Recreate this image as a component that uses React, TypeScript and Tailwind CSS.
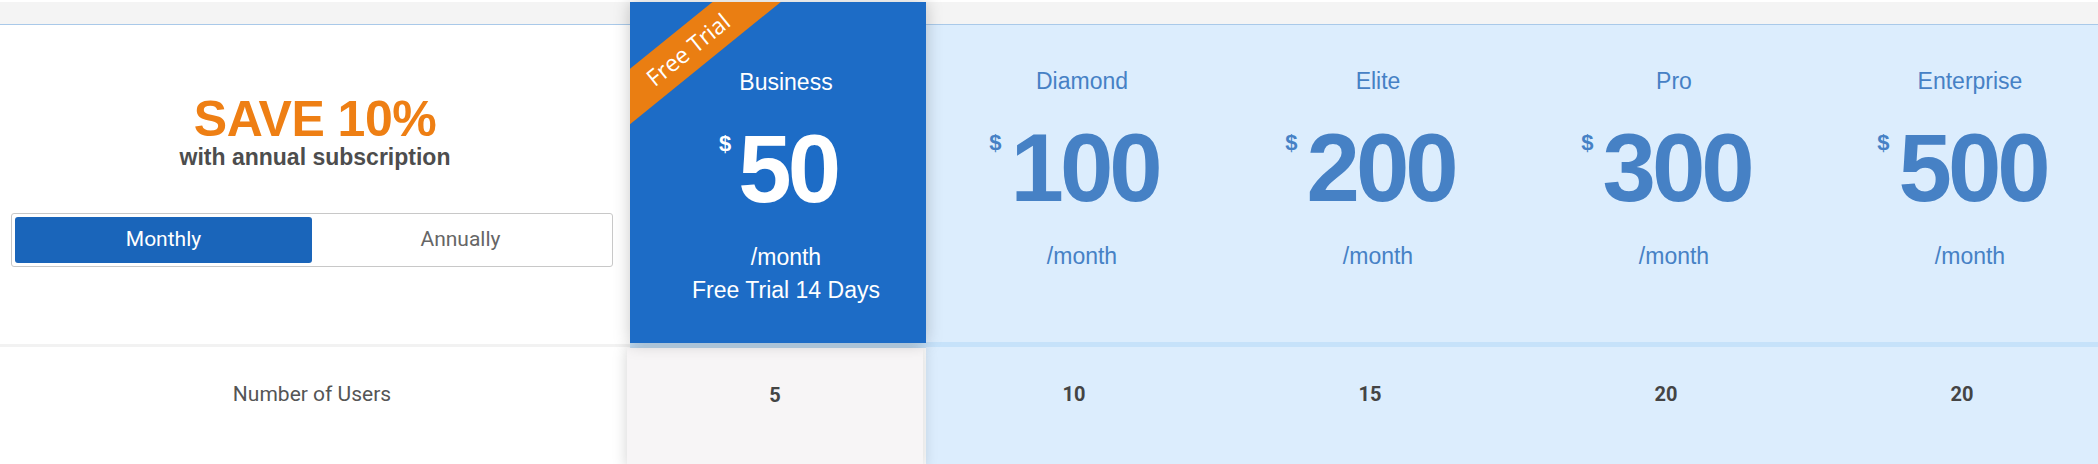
import React from "react";

const plans = [
  { name: "Diamond", price: "100", users: "10" },
  { name: "Elite", price: "200", users: "15" },
  { name: "Pro", price: "300", users: "20" },
  { name: "Enterprise", price: "500", users: "20" },
];

const Price = ({ value, gap }: { value: string; gap: string }) => {
  return (
    <div className="mt-[26px] flex justify-center">
      <span className={`mt-[12px] ${gap} text-[22px] font-bold leading-none`}>$</span>
      <span className="text-[96px] font-bold leading-none tracking-[-4px]">{value}</span>
    </div>
  );
};

const TopStrip = () => <div className="h-[23px] border-b border-[#a9c9e9] bg-[#f4f4f4]" />;

const App = () => {
  return (
    <div className="h-[464px] w-full overflow-hidden bg-white pt-[2px] font-['Liberation_Sans',Arial,sans-serif]">
      <div className="flex w-[2110px]">
        {/* left column */}
        <div className="flex w-[630px] shrink-0 flex-col">
          <TopStrip />
          <div className="h-[319px] bg-white pt-[69px]">
            <div className="text-center">
              <p className="text-[50px] font-bold leading-none tracking-[-0.5px] text-[#ee7f14]">
                SAVE 10%
              </p>
              <p className="text-[23px] font-bold leading-[26px] text-[#4d4d4d]">
                with annual subscription
              </p>
            </div>
            <div className="ml-[11px] mt-[43px] flex h-[54px] w-[602px] rounded-[3px] border border-[#c8c8c8] p-[3px] font-['Roboto',sans-serif] text-[21px]">
              <button className="flex-1 rounded-[3px] bg-[#1a65ba] text-white">Monthly</button>
              <button className="flex-1 text-[#666]">Annually</button>
            </div>
          </div>
          <div className="h-[3px] bg-[#f2f2f2]" />
          <div className="h-[120px] py-[34px] pr-[6px] text-center font-['Roboto',sans-serif] text-[21px] leading-[26px] text-[#555]">
            Number of Users
          </div>
        </div>

        {/* business column */}
        <div className="relative z-10 flex w-[296px] shrink-0 flex-col">
          <div className="relative h-[341px] overflow-hidden bg-[#1d6cc6] pt-[67px] text-center text-white shadow-[0_0_16px_rgba(0,0,0,0.22)]">
            <div className="absolute left-[-62px] top-[26px] flex h-[43px] w-[240px] rotate-[-39deg] items-center justify-center bg-[#ea7e12] font-['Open_Sans',sans-serif] text-[23px] font-medium">
              Free Trial
            </div>
            <p className="pl-[16px] text-[23px] leading-[26px]">Business</p>
            <Price value="50" gap="mr-[7px]" />
            <p className="mt-[25px] pl-[16px] text-[23px] leading-[30px]">/month</p>
            <p className="mt-[3px] pl-[16px] text-[23px] leading-[30px]">Free Trial 14 Days</p>
          </div>
          <div className="h-[5px] bg-[#c9e5fc]" />
          <div className="-ml-[3px] h-[120px] w-[296px] bg-[#f7f5f6] py-[34px] text-center font-['Roboto',sans-serif] text-[20px] font-bold leading-[26px] text-[#444] shadow-[0_0_14px_rgba(0,0,0,0.18)]">
            5
          </div>
        </div>

        {/* other plans */}
        {plans.map((plan) => (
          <div key={plan.name} className="flex w-[296px] shrink-0 flex-col">
            <TopStrip />
            <div className="h-[317px] bg-[#dcedfd] pt-[43px] text-center text-[#4681c5]">
              <p className="pl-[16px] text-[23px] leading-[26px]">{plan.name}</p>
              <Price value={plan.price} gap="mr-[9px]" />
              <p className="mt-[25px] pl-[16px] text-[23px] leading-[30px]">/month</p>
            </div>
            <div className="h-[5px] bg-[#c6e2fa]" />
            <div className="h-[120px] bg-[#dcedfd] py-[34px] text-center font-['Roboto',sans-serif] text-[20px] font-bold leading-[26px] text-[#444]">
              {plan.users}
            </div>
          </div>
        ))}
      </div>
    </div>
  );
};

export default App;
